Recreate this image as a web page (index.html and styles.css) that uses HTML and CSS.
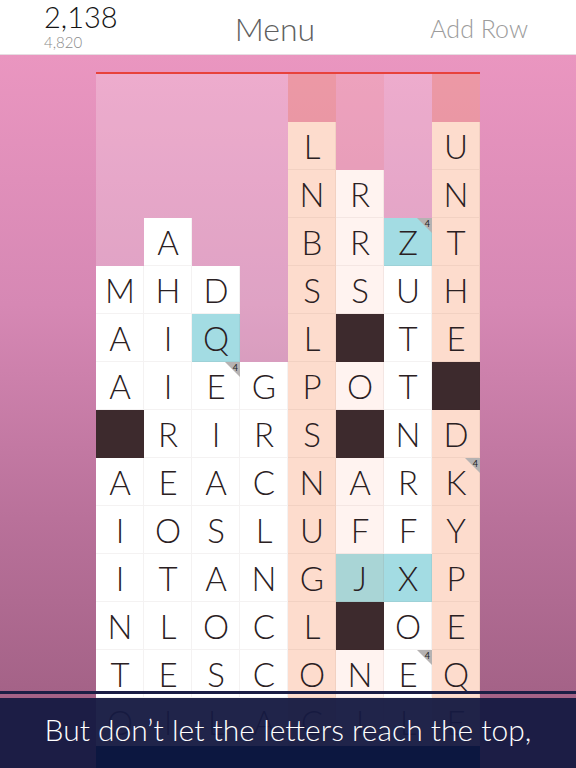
FILE: index.html
```html
<!DOCTYPE html>
<html>
<head>
<meta charset="utf-8">
<link rel="stylesheet" href="styles.css">
</head>
<body>
<header class="topbar">
  <div class="score">
    <div class="score-main">2,138</div>
    <div class="score-best">4,820</div>
  </div>
  <div class="menu">Menu</div>
  <div class="addrow">Add Row</div>
</header>
<main class="stage">
  <div class="board">
    <div class="cols">
      <div class="col soft">
        <div class="c">M</div><div class="c">A</div><div class="c">A</div><div class="c x"></div><div class="c">A</div><div class="c">I</div><div class="c">I</div><div class="c">N</div><div class="c">T</div><div class="c">O</div>
      </div>
      <div class="col soft">
        <div class="c">A</div><div class="c">H</div><div class="c">I</div><div class="c">I</div><div class="c">R</div><div class="c">E</div><div class="c">O</div><div class="c">T</div><div class="c">L</div><div class="c">E</div><div class="c">I</div>
      </div>
      <div class="col soft">
        <div class="c">D</div><div class="c q">Q</div><div class="c b4">E<span class="badge">4</span></div><div class="c">I</div><div class="c">A</div><div class="c">S</div><div class="c">A</div><div class="c">O</div><div class="c">S</div><div class="c">L</div>
      </div>
      <div class="col soft">
        <div class="c">G</div><div class="c">R</div><div class="c">C</div><div class="c">L</div><div class="c">N</div><div class="c">C</div><div class="c">C</div><div class="c">A</div>
      </div>
      <div class="col hot peach">
        <div class="c">L</div><div class="c">N</div><div class="c">B</div><div class="c">S</div><div class="c">L</div><div class="c">P</div><div class="c">S</div><div class="c">N</div><div class="c">U</div><div class="c">G</div><div class="c">L</div><div class="c">O</div><div class="c">C</div>
      </div>
      <div class="col warm blush">
        <div class="c">R</div><div class="c">R</div><div class="c">S</div><div class="c x"></div><div class="c">O</div><div class="c x"></div><div class="c">A</div><div class="c">F</div><div class="c q2">J</div><div class="c x"></div><div class="c">N</div><div class="c">I</div>
      </div>
      <div class="col soft">
        <div class="c q b4">Z<span class="badge">4</span></div><div class="c">U</div><div class="c">T</div><div class="c">T</div><div class="c">N</div><div class="c">R</div><div class="c">F</div><div class="c q">X</div><div class="c">O</div><div class="c b4">E<span class="badge">4</span></div><div class="c">L</div>
      </div>
      <div class="col hot peach">
        <div class="c">U</div><div class="c">N</div><div class="c">T</div><div class="c">H</div><div class="c">E</div><div class="c x"></div><div class="c">D</div><div class="c b4">K<span class="badge">4</span></div><div class="c">Y</div><div class="c">P</div><div class="c">E</div><div class="c">Q</div><div class="c">E</div>
      </div>
    </div>
    <div class="board-foot"></div>
  </div>
  <div class="caption">
    <div class="caption-text">But don’t let the letters reach the top,</div>
  </div>
</main>
</body>
</html>
```

FILE: styles.css
```css
html, body {
  margin: 0;
  padding: 0;
}
body {
  width: 576px;
  height: 768px;
  overflow: hidden;
  font-family: Lato, "Open Sans", "DejaVu Sans", sans-serif;
  font-weight: 300;
  background: #ffffff;
}
.topbar {
  height: 54px;
  border-bottom: 1px solid #e6dde2;
  background: #ffffff;
  display: flex;
  align-items: flex-start;
  justify-content: space-between;
  padding: 0 48px 0 44px;
  box-sizing: content-box;
}
.score {
  display: flex;
  flex-direction: column;
}
.score-main {
  font-size: 29px;
  line-height: 34px;
  color: #141414;
  font-weight: 300;
}
.score-best {
  font-size: 15px;
  line-height: 16px;
  color: #8a8a8a;
}
.menu {
  font-size: 32px;
  line-height: 58px;
  color: #5e5e5e;
  font-weight: 300;
  margin-left: 2px;
}
.addrow {
  font-size: 25px;
  line-height: 56px;
  color: #9c9c9c;
}
.stage {
  position: relative;
  height: 713px;
  background: linear-gradient(180deg, #ea96c0 0%, #d688b4 35%, #b9719a 65%, #9b5c7f 100%);
  overflow: hidden;
}
.board {
  width: 384px;
  margin: 0 auto;
  padding-top: 17px;
}
.cols {
  display: flex;
  border-top: 2px solid #e8423c;
  height: 672px;
}
.col {
  width: 48px;
  display: flex;
  flex-direction: column;
  justify-content: flex-end;
}
.col.soft { background: rgba(255, 255, 255, 0.22); }
.col.hot { background: rgba(240, 155, 140, 0.5); }
.col.warm { background: rgba(245, 185, 185, 0.35); }
.c {
  position: relative;
  height: 48px;
  flex: 0 0 48px;
  background: #ffffff;
  box-shadow: inset -1px -1px 0 rgba(60, 30, 30, 0.06);
  text-align: center;
  font-size: 33px;
  line-height: 48px;
  color: #2a2022;
}
.col.peach .c { background: #fddccd; }
.col.blush .c { background: #fff3f0; }
.col .c.q { background: #a3dce3; }
.col .c.q2 { background: #a9d5d6; }
.col .c.x { background: #3d2a2d; }
.b4::after {
  content: "";
  position: absolute;
  top: 0;
  right: 0;
  border-style: solid;
  border-width: 0 15px 15px 0;
  border-color: transparent #b5b2b2 transparent transparent;
}
.badge {
  position: absolute;
  top: 1px;
  right: 2px;
  z-index: 1;
  font-size: 9px;
  line-height: 10px;
  color: #222;
  font-weight: 400;
}
.board-foot {
  height: 22px;
  background: #0c1740;
  position: relative;
  z-index: 3;
}
.caption {
  position: absolute;
  left: 0;
  right: 0;
  bottom: 0;
  height: 74px;
  border-top: 3px solid #1b1e45;
  z-index: 2;
}
.caption::before {
  content: "";
  position: absolute;
  left: 0;
  right: 0;
  top: 4px;
  bottom: 0;
  background: rgba(22, 26, 66, 0.955);
}
.caption-text {
  position: relative;
  height: 70px;
  display: flex;
  align-items: center;
  justify-content: center;
  color: #ffffff;
  font-size: 30px;
  font-weight: 300;
}
```
